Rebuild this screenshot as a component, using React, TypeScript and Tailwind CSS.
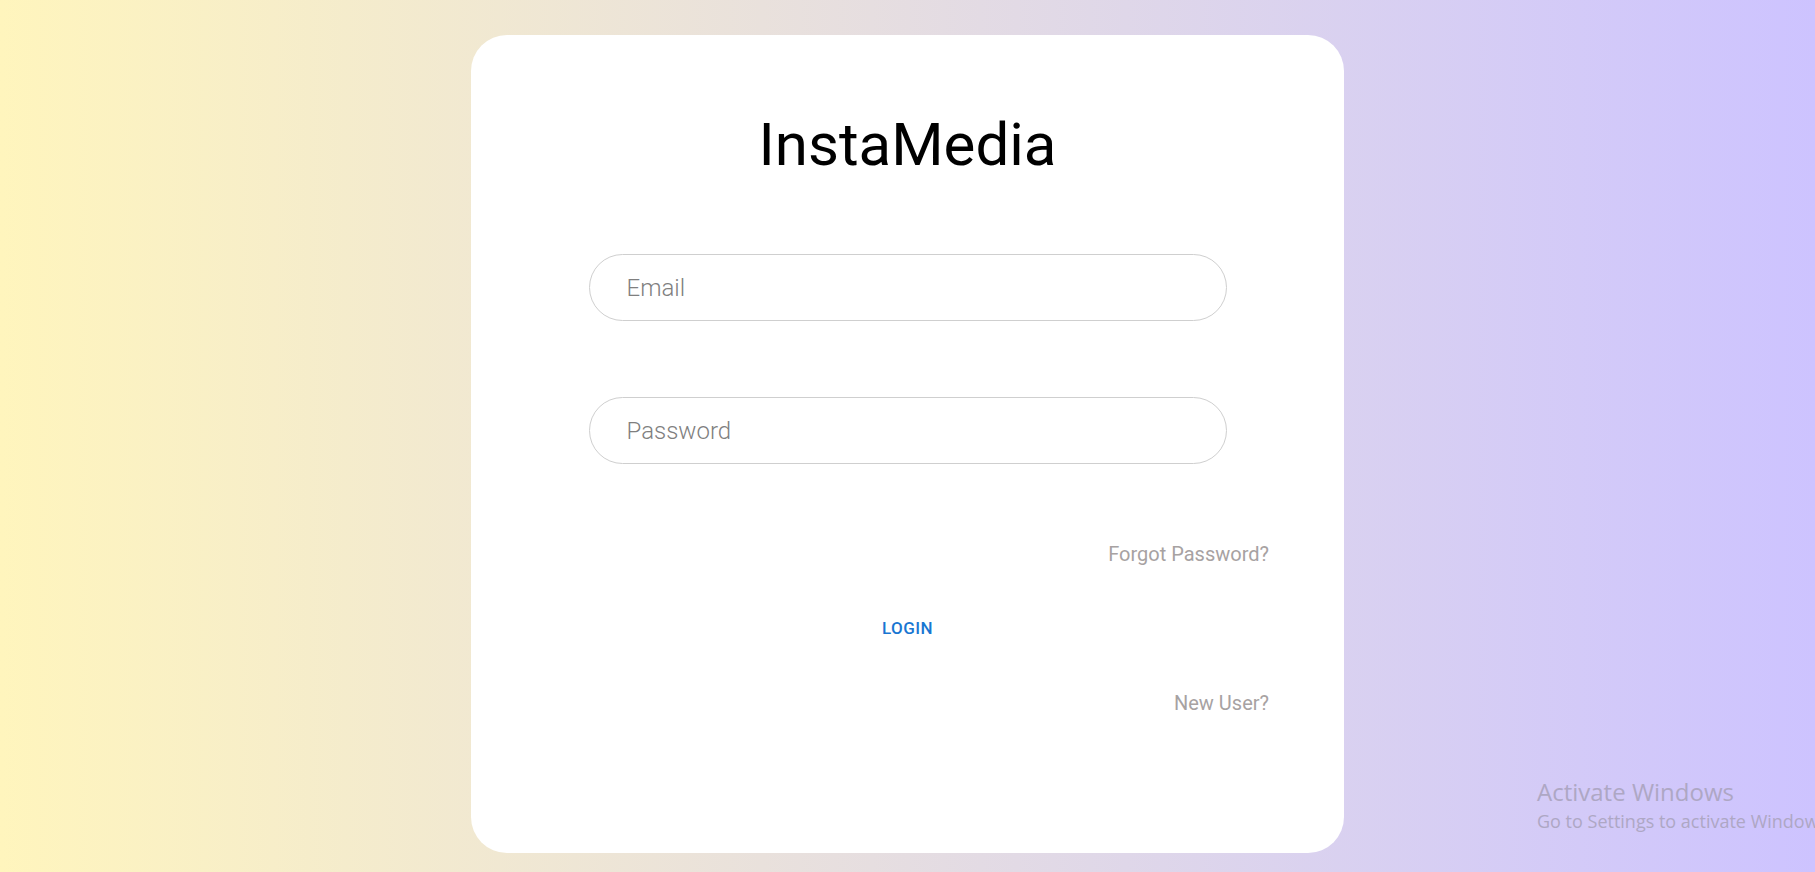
import React, { useState } from "react";

const font = { fontFamily: "Roboto, 'Liberation Sans', Arial, sans-serif" };

export default function App() {
  const [email, setEmail] = useState("");
  const [password, setPassword] = useState("");

  return (
    <div
      className="relative min-h-screen w-full overflow-hidden bg-gradient-to-r from-[#fff5bd] to-[#cdc3ff] pt-[35px] pb-[19px]"
      style={font}
    >
      <div className="mx-auto flex h-[818px] w-[873px] flex-col rounded-[36px] bg-white px-[75px] pt-[74px]">
        <h2 className="text-center text-[60px] font-normal leading-[72px] text-black">
          InstaMedia
        </h2>

        <input
          type="email"
          placeholder="Email"
          value={email}
          onChange={(e) => setEmail(e.target.value)}
          className="mx-auto mt-[73px] h-[67px] w-[638px] rounded-full border border-[#cfcfcf] bg-white pl-[37px] pr-6 text-[24px] font-light text-[#333] placeholder:text-[#7f7f7f] outline-none"
        />
        <input
          type="password"
          placeholder="Password"
          value={password}
          onChange={(e) => setPassword(e.target.value)}
          className="mx-auto mt-[76px] h-[67px] w-[638px] rounded-full border border-[#cfcfcf] bg-white pl-[37px] pr-6 text-[24px] font-light text-[#333] placeholder:text-[#7f7f7f] outline-none"
        />

        <div className="mt-[75px] text-right text-[20px] leading-[30px] text-[#a7a2a2]">
          Forgot Password?
        </div>

        <div className="mt-[38px] flex justify-center">
          <button
            type="button"
            className="px-2 py-[6px] text-[17px] font-medium uppercase leading-[30px] tracking-[0.02857em] text-[#1976d2]"
          >
            Login
          </button>
        </div>

        <div className="mt-[39px] text-right text-[20px] leading-[30px] text-[#a7a2a2]">
          New User?
        </div>
      </div>

      <div
        className="pointer-events-none absolute left-[1537px] top-[776px] whitespace-nowrap text-[#aea7c4]"
        style={{ fontFamily: "'Open Sans', 'Noto Sans', sans-serif" }}
      >
        <div className="text-[24px] leading-[32px]">Activate Windows</div>
        <div className="text-[18px] leading-[26px]">Go to Settings to activate Windows.</div>
      </div>
    </div>
  );
}
